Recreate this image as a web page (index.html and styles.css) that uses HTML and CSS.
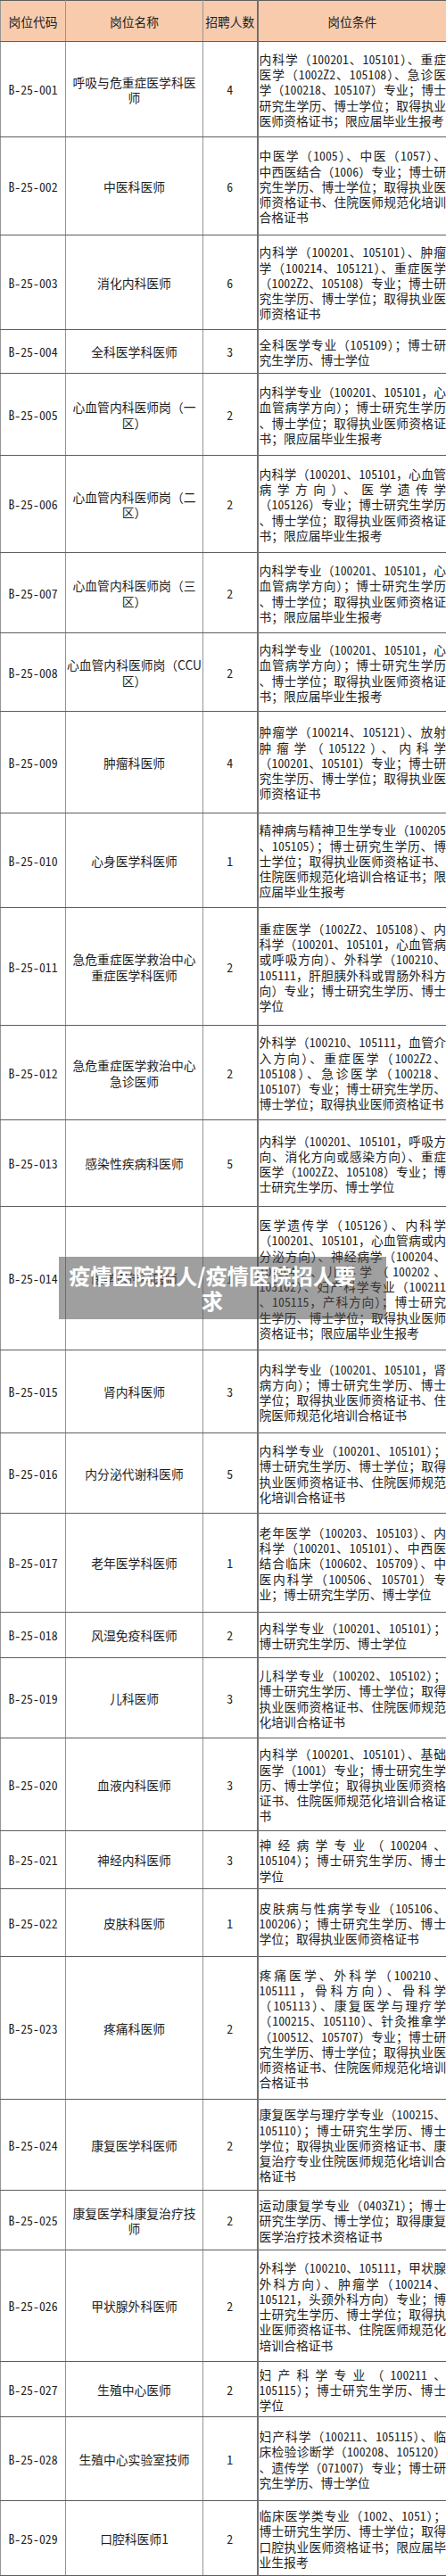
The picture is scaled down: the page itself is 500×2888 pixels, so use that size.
FILE: index.html
```html
<!DOCTYPE html>
<html lang="zh-CN">
<head>
<meta charset="utf-8">
<title>岗位表</title>
<link rel="stylesheet" href="styles.css">
</head>
<body>
<table class="grid">
<colgroup><col class="c1"><col class="c2"><col class="c3"><col class="c4"></colgroup>
<thead>
<tr class="h46"><th>岗位代码</th><th>岗位名称</th><th>招聘人数</th><th class="hc">岗位条件</th></tr>
</thead>
<tbody>
<tr class="h107"><td class="n">B-25-001</td><td>呼吸与危重症医学科医<br>师</td><td class="n">4</td><td class="cond"><span class="ln">内科学（<span class="n">100201</span>、<span class="n">105101</span>）、重症</span><span class="ln">医学（<span class="n">1002Z2</span>、<span class="n">105108</span>）、急诊医</span><span class="ln">学（<span class="n">100218</span>、<span class="n">105107</span>）专业；博士</span><span class="ln">研究生学历、博士学位；取得执业</span><span class="ln end">医师资格证书；限应届毕业生报考</span></td></tr>
<tr class="h110"><td class="n">B-25-002</td><td>中医科医师</td><td class="n">6</td><td class="cond"><span class="ln">中医学（<span class="n">1005</span>）、中医（<span class="n">1057</span>）、</span><span class="ln">中西医结合（<span class="n">1006</span>）专业；博士研</span><span class="ln">究生学历、博士学位；取得执业医</span><span class="ln">师资格证书、住院医师规范化培训</span><span class="ln end">合格证书</span></td></tr>
<tr class="h106"><td class="n">B-25-003</td><td>消化内科医师</td><td class="n">6</td><td class="cond"><span class="ln">内科学（<span class="n">100201</span>、<span class="n">105101</span>）、肿瘤</span><span class="ln">学（<span class="n">100214</span>、<span class="n">105121</span>）、重症医学</span><span class="ln">（<span class="n">1002Z2</span>、<span class="n">105108</span>）专业；博士研</span><span class="ln">究生学历、博士学位；取得执业医</span><span class="ln end">师资格证书</span></td></tr>
<tr class="h49"><td class="n">B-25-004</td><td>全科医学科医师</td><td class="n">3</td><td class="cond"><span class="ln">全科医学专业（<span class="n">105109</span>）；博士研</span><span class="ln end">究生学历、博士学位</span></td></tr>
<tr class="h92"><td class="n">B-25-005</td><td>心血管内科医师岗（一<br>区）</td><td class="n">2</td><td class="cond"><span class="ln">内科学专业（<span class="n">100201</span>、<span class="n">105101</span>，心</span><span class="ln">血管病学方向）；博士研究生学历</span><span class="ln">、博士学位；取得执业医师资格证</span><span class="ln end">书；限应届毕业生报考</span></td></tr>
<tr class="h109"><td class="n">B-25-006</td><td>心血管内科医师岗（二<br>区）</td><td class="n">2</td><td class="cond"><span class="ln">内科学（<span class="n">100201</span>、<span class="n">105101</span>，心血管</span><span class="ln">病学方向）、医学遗传学</span><span class="ln">（<span class="n">105126</span>）专业；博士研究生学历</span><span class="ln">、博士学位；取得执业医师资格证</span><span class="ln end">书；限应届毕业生报考</span></td></tr>
<tr class="h90"><td class="n">B-25-007</td><td>心血管内科医师岗（三<br>区）</td><td class="n">2</td><td class="cond"><span class="ln">内科学专业（<span class="n">100201</span>、<span class="n">105101</span>，心</span><span class="ln">血管病学方向）；博士研究生学历</span><span class="ln">、博士学位；取得执业医师资格证</span><span class="ln end">书；限应届毕业生报考</span></td></tr>
<tr class="h88"><td class="n">B-25-008</td><td>心血管内科医师岗（CCU<br>区）</td><td class="n">2</td><td class="cond"><span class="ln">内科学专业（<span class="n">100201</span>、<span class="n">105101</span>，心</span><span class="ln">血管病学方向）；博士研究生学历</span><span class="ln">、博士学位；取得执业医师资格证</span><span class="ln end">书；限应届毕业生报考</span></td></tr>
<tr class="h114"><td class="n">B-25-009</td><td>肿瘤科医师</td><td class="n">4</td><td class="cond"><span class="ln">肿瘤学（<span class="n">100214</span>、<span class="n">105121</span>）、放射</span><span class="ln">肿瘤学（<span class="n">105122</span>）、内科学</span><span class="ln">（<span class="n">100201</span>、<span class="n">105101</span>）专业；博士研</span><span class="ln">究生学历、博士学位；取得执业医</span><span class="ln end">师资格证书</span></td></tr>
<tr class="h106"><td class="n">B-25-010</td><td>心身医学科医师</td><td class="n">1</td><td class="cond"><span class="ln">精神病与精神卫生学专业（<span class="n">100205</span></span><span class="ln">、<span class="n">105105</span>）；博士研究生学历、博</span><span class="ln">士学位；取得执业医师资格证书、</span><span class="ln">住院医师规范化培训合格证书；限</span><span class="ln end">应届毕业生报考</span></td></tr>
<tr class="h132"><td class="n">B-25-011</td><td>急危重症医学救治中心<br>重症医学科医师</td><td class="n">2</td><td class="cond"><span class="ln">重症医学（<span class="n">1002Z2</span>、<span class="n">105108</span>）、内</span><span class="ln">科学（<span class="n">100201</span>、<span class="n">105101</span>，心血管病</span><span class="ln">或呼吸方向）、外科学（<span class="n">100210</span>、</span><span class="ln"><span class="n">105111</span>，肝胆胰外科或胃肠外科方</span><span class="ln">向）专业；博士研究生学历、博士</span><span class="ln end">学位</span></td></tr>
<tr class="h106"><td class="n">B-25-012</td><td>急危重症医学救治中心<br>急诊医师</td><td class="n">2</td><td class="cond"><span class="ln">外科学（<span class="n">100210</span>、<span class="n">105111</span>，血管介</span><span class="ln">入方向）、重症医学（<span class="n">1002Z2</span>、</span><span class="ln"><span class="n">105108</span>）、急诊医学（<span class="n">100218</span>、</span><span class="ln"><span class="n">105107</span>）专业；博士研究生学历、</span><span class="ln end">博士学位；取得执业医师资格证书</span></td></tr>
<tr class="h97"><td class="n">B-25-013</td><td>感染性疾病科医师</td><td class="n">5</td><td class="cond"><span class="ln">内科学（<span class="n">100201</span>、<span class="n">105101</span>，呼吸方</span><span class="ln">向、消化方向或感染方向）、重症</span><span class="ln">医学（<span class="n">1002Z2</span>、<span class="n">105108</span>）专业；博</span><span class="ln end">士研究生学历、博士学位</span></td></tr>
<tr class="h161"><td class="n">B-25-014</td><td>医学遗传科医师</td><td class="n">1</td><td class="cond"><span class="ln">医学遗传学（<span class="n">105126</span>）、内科学</span><span class="ln">（<span class="n">100201</span>、<span class="n">105101</span>，心血管病或内</span><span class="ln">分泌方向）、神经病学（<span class="n">100204</span>、</span><span class="ln"><span class="n">105104</span>）、儿科学（<span class="n">100202</span>、</span><span class="ln"><span class="n">105102</span>）、妇产科学专业（<span class="n">100211</span></span><span class="ln">、<span class="n">105115</span>，产科方向）；博士研究</span><span class="ln">生学历、博士学位；取得执业医师</span><span class="ln end">资格证书；限应届毕业生报考</span></td></tr>
<tr class="h93"><td class="n">B-25-015</td><td>肾内科医师</td><td class="n">3</td><td class="cond"><span class="ln">内科学专业（<span class="n">100201</span>、<span class="n">105101</span>，肾</span><span class="ln">病方向）；博士研究生学历、博士</span><span class="ln">学位；取得执业医师资格证书、住</span><span class="ln end">院医师规范化培训合格证书</span></td></tr>
<tr class="h90"><td class="n">B-25-016</td><td>内分泌代谢科医师</td><td class="n">5</td><td class="cond"><span class="ln">内科学专业（<span class="n">100201</span>、<span class="n">105101</span>）；</span><span class="ln">博士研究生学历、博士学位；取得</span><span class="ln">执业医师资格证书、住院医师规范</span><span class="ln end">化培训合格证书</span></td></tr>
<tr class="h111"><td class="n">B-25-017</td><td>老年医学科医师</td><td class="n">1</td><td class="cond"><span class="ln">老年医学（<span class="n">100203</span>、<span class="n">105103</span>）、内</span><span class="ln">科学（<span class="n">100201</span>、<span class="n">105101</span>）、中西医</span><span class="ln">结合临床（<span class="n">100602</span>、<span class="n">105709</span>）、中</span><span class="ln">医内科学（<span class="n">100506</span>、<span class="n">105701</span>）专</span><span class="ln end">业；博士研究生学历、博士学位</span></td></tr>
<tr class="h51"><td class="n">B-25-018</td><td>风湿免疫科医师</td><td class="n">2</td><td class="cond"><span class="ln">内科学专业（<span class="n">100201</span>、<span class="n">105101</span>）；</span><span class="ln end">博士研究生学历、博士学位</span></td></tr>
<tr class="h90"><td class="n">B-25-019</td><td>儿科医师</td><td class="n">3</td><td class="cond"><span class="ln">儿科学专业（<span class="n">100202</span>、<span class="n">105102</span>）；</span><span class="ln">博士研究生学历、博士学位；取得</span><span class="ln">执业医师资格证书、住院医师规范</span><span class="ln end">化培训合格证书</span></td></tr>
<tr class="h104"><td class="n">B-25-020</td><td>血液内科医师</td><td class="n">3</td><td class="cond"><span class="ln">内科学（<span class="n">100201</span>、<span class="n">105101</span>）、基础</span><span class="ln">医学（<span class="n">1001</span>）专业；博士研究生学</span><span class="ln">历、博士学位；取得执业医师资格</span><span class="ln">证书、住院医师规范化培训合格证</span><span class="ln end">书</span></td></tr>
<tr class="h65"><td class="n">B-25-021</td><td>神经内科医师</td><td class="n">3</td><td class="cond"><span class="ln">神经病学专业（<span class="n">100204</span>、</span><span class="ln"><span class="n">105104</span>）；博士研究生学历、博士</span><span class="ln end">学位</span></td></tr>
<tr class="h76"><td class="n">B-25-022</td><td>皮肤科医师</td><td class="n">1</td><td class="cond"><span class="ln">皮肤病与性病学专业（<span class="n">105106</span>、</span><span class="ln"><span class="n">100206</span>）；博士研究生学历、博士</span><span class="ln end">学位；取得执业医师资格证书</span></td></tr>
<tr class="h160"><td class="n">B-25-023</td><td>疼痛科医师</td><td class="n">2</td><td class="cond"><span class="ln">疼痛医学、外科学（<span class="n">100210</span>、</span><span class="ln"><span class="n">105111</span>，骨科方向）、骨科学</span><span class="ln">（<span class="n">105113</span>）、康复医学与理疗学</span><span class="ln">（<span class="n">100215</span>、<span class="n">105110</span>）、针灸推拿学</span><span class="ln">（<span class="n">100512</span>、<span class="n">105707</span>）专业；博士研</span><span class="ln">究生学历、博士学位；取得执业医</span><span class="ln">师资格证书、住院医师规范化培训</span><span class="ln end">合格证书</span></td></tr>
<tr class="h102"><td class="n">B-25-024</td><td>康复医学科医师</td><td class="n">2</td><td class="cond"><span class="ln">康复医学与理疗学专业（<span class="n">100215</span>、</span><span class="ln"><span class="n">105110</span>）；博士研究生学历、博士</span><span class="ln">学位；取得执业医师资格证书、康</span><span class="ln">复治疗专业住院医师规范化培训合</span><span class="ln end">格证书</span></td></tr>
<tr class="h67"><td class="n">B-25-025</td><td>康复医学科康复治疗技<br>师</td><td class="n">2</td><td class="cond"><span class="ln">运动康复学专业（<span class="n">0403Z1</span>）；博士</span><span class="ln">研究生学历、博士学位；取得康复</span><span class="ln end">医学治疗技术资格证书</span></td></tr>
<tr class="h125"><td class="n">B-25-026</td><td>甲状腺外科医师</td><td class="n">2</td><td class="cond"><span class="ln">外科学（<span class="n">100210</span>、<span class="n">105111</span>，甲状腺</span><span class="ln">外科方向）、肿瘤学（<span class="n">100214</span>、</span><span class="ln"><span class="n">105121</span>，头颈外科方向）专业；博</span><span class="ln">士研究生学历、博士学位；取得执</span><span class="ln">业医师资格证书、住院医师规范化</span><span class="ln end">培训合格证书</span></td></tr>
<tr class="h62"><td class="n">B-25-027</td><td>生殖中心医师</td><td class="n">2</td><td class="cond"><span class="ln">妇产科学专业（<span class="n">100211</span>、</span><span class="ln"><span class="n">105115</span>）；博士研究生学历、博士</span><span class="ln end">学位</span></td></tr>
<tr class="h94"><td class="n">B-25-028</td><td>生殖中心实验室技师</td><td class="n">1</td><td class="cond"><span class="ln">妇产科学（<span class="n">100211</span>、<span class="n">105115</span>）、临</span><span class="ln">床检验诊断学（<span class="n">100208</span>、<span class="n">105120</span>）</span><span class="ln">、遗传学（<span class="n">071007</span>）专业；博士研</span><span class="ln end">究生学历、博士学位</span></td></tr>
<tr class="h84"><td class="n">B-25-029</td><td>口腔科医师1</td><td class="n">2</td><td class="cond"><span class="ln">临床医学类专业（<span class="n">1002</span>、<span class="n">1051</span>）；</span><span class="ln">博士研究生学历、博士学位；取得</span><span class="ln">口腔执业医师资格证书；限应届毕</span><span class="ln end">业生报考</span></td></tr>
</tbody>
</table>
<div class="wm">疫情医院招人/疫情医院招人要<br>求</div>
</body>
</html>
```

FILE: styles.css
```css
html, body {
  margin: 0;
  padding: 0;
  background: #ffffff;
}

body {
  position: relative;
  width: 500px;
  font-family: "Noto Sans CJK SC", "Noto Sans", sans-serif;
  font-size: 13.8px;
  color: #1e1e1e;
}

.n {
  font-feature-settings: "hwid" 1;
}

.grid {
  width: 500px;
  border-collapse: collapse;
  table-layout: fixed;
}

.c1 { width: 73px; }
.c2 { width: 154px; }
.c3 { width: 61px; }
.c4 { width: 212px; }

.grid th,
.grid td {
  border-top: 1px solid #5e5e5e;
  border-bottom: 1px solid #5e5e5e;
  border-left: 1px solid #959595;
  border-right: 1px solid #959595;
  padding: 2px 0 0 0;
  vertical-align: middle;
  text-align: center;
  line-height: 17.25px;
  font-weight: normal;
  overflow: hidden;
}

.grid th {
  background: #f8cbad;
  color: #222222;
}

.grid th.hc,
.grid td.cond {
  border-left: 2px solid #6f6f6f;
}

.grid td.cond {
  text-align: left;
  padding: 2px 0 0 1px;
}

.ln {
  display: block;
  text-align: justify;
  text-align-last: justify;
}

.ln.end {
  text-align-last: left;
}

.h46 { height: 46px; }
.h49 { height: 49px; }
.h51 { height: 51px; }
.h62 { height: 62px; }
.h65 { height: 65px; }
.h67 { height: 67px; }
.h76 { height: 76px; }
.h84 { height: 84px; }
.h88 { height: 88px; }
.h90 { height: 90px; }
.h92 { height: 92px; }
.h93 { height: 93px; }
.h94 { height: 94px; }
.h97 { height: 97px; }
.h102 { height: 102px; }
.h104 { height: 104px; }
.h106 { height: 106px; }
.h107 { height: 107px; }
.h109 { height: 109px; }
.h110 { height: 110px; }
.h111 { height: 111px; }
.h114 { height: 114px; }
.h125 { height: 125px; }
.h132 { height: 132px; }
.h160 { height: 160px; }
.h161 { height: 161px; }

.wm {
  position: absolute;
  top: 1409px;
  left: 66px;
  width: 367px;
  height: 70px;
  box-sizing: border-box;
  padding: 7px 34px 7px 11px;
  background: rgba(70, 70, 70, 0.52);
  color: #ffffff;
  font-size: 24px;
  font-weight: 700;
  line-height: 28px;
  text-align: center;
  white-space: nowrap;
}
```
